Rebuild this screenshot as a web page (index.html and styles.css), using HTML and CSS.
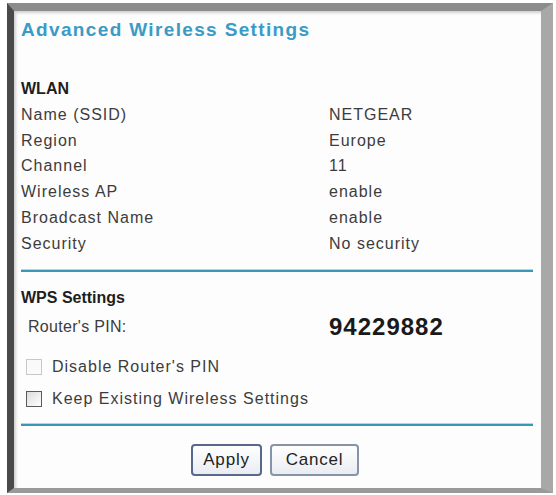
FILE: index.html
```html
<!DOCTYPE html>
<html>
<head>
<meta charset="utf-8">
<link rel="stylesheet" href="styles.css">
</head>
<body>
<div class="frame">
  <div class="content">
    <h1 class="title">Advanced Wireless Settings</h1>
    <div class="table">
      <div class="row head"><span>WLAN</span></div>
      <div class="row"><span class="lbl">Name (SSID)</span><span>NETGEAR</span></div>
      <div class="row"><span class="lbl">Region</span><span>Europe</span></div>
      <div class="row"><span class="lbl">Channel</span><span>11</span></div>
      <div class="row"><span class="lbl">Wireless AP</span><span>enable</span></div>
      <div class="row"><span class="lbl">Broadcast Name</span><span>enable</span></div>
      <div class="row"><span class="lbl">Security</span><span>No security</span></div>
    </div>
    <div class="rule"></div>
    <div class="row head wps"><span>WPS Settings</span></div>
    <div class="pinrow"><span class="pinlbl">Router's PIN:</span><span class="pin">94229882</span></div>
    <div class="check first"><span class="box disabled"></span><span>Disable Router's PIN</span></div>
    <div class="check"><span class="box"></span><span>Keep Existing Wireless Settings</span></div>
    <div class="rule rule2"></div>
    <div class="buttons">
      <button class="btn apply">Apply</button>
      <button class="btn cancel">Cancel</button>
    </div>
  </div>
</div>
</body>
</html>
```

FILE: styles.css
```css
html, body {
  margin: 0;
  padding: 0;
  background: #ffffff;
}
body {
  font-family: "Liberation Sans", Arial, sans-serif;
  color: #3c3c3c;
  width: 556px;
  height: 495px;
  overflow: hidden;
}
.frame {
  margin: 3px 3px 0 7px;
  height: 477px;
  border-left: 7px solid #4a4a4a;
  border-top: 8px solid #8c8c8c;
  border-right: 12px solid #a8a8a8;
  border-bottom: 5px solid #9a9a9a;
  background: #fdfdfd;
  box-shadow: inset 2px 2px 3px rgba(0,0,0,0.18);
}
.content {
  padding: 8px 8px 0 7px;
}
.title {
  margin: 0;
  font-size: 19px;
  line-height: 22px;
  font-weight: bold;
  letter-spacing: 1.35px;
  color: #3a9bc6;
}
.table {
  margin-top: 35px;
}
.row {
  display: grid;
  grid-template-columns: 308px 1fr;
  font-size: 16px;
  line-height: 25.8px;
  letter-spacing: 1px;
  height: 25.8px;
}
.row.head {
  font-weight: bold;
  color: #1e1e1e;
  letter-spacing: 0;
}
.rule {
  margin-top: 12px;
  height: 2px;
  background: #3a97b6;
  border-top: 1px solid #a6dcea;
}
.wps {
  margin-top: 13px;
}
.pinrow {
  display: grid;
  grid-template-columns: 301px 1fr;
  align-items: center;
  height: 30px;
  margin-top: 2px;
  padding-left: 7px;
}
.pinlbl {
  font-size: 16px;
  letter-spacing: 0.3px;
}
.pin {
  font-size: 24px;
  font-weight: bold;
  color: #1a1a1a;
  letter-spacing: 1px;
}
.check {
  display: flex;
  align-items: center;
  gap: 10px;
  height: 32px;
  padding-left: 5px;
  font-size: 16px;
  letter-spacing: 1px;
}
.check.first {
  margin-top: 9px;
}
.box {
  width: 14px;
  height: 14px;
  border: 1px solid #5a5a5a;
  background: linear-gradient(135deg, #dcdcdc, #ffffff);
}
.box.disabled {
  border-color: #c8c8c8;
  background: #fafafa;
}
.rule2 {
  margin-top: 8px;
}
.buttons {
  display: flex;
  justify-content: center;
  gap: 8px;
  margin-top: 18px;
  padding-right: 4px;
}
.btn {
  font-family: "Liberation Sans", Arial, sans-serif;
  font-size: 17px;
  letter-spacing: 0.8px;
  color: #222;
  height: 32px;
  padding: 0;
  border-radius: 4px;
  background: linear-gradient(#ffffff, #e9ecf2);
}
.apply {
  width: 71px;
  border: 2px solid #56698a;
}
.cancel {
  width: 89px;
  border: 2px solid #8793a6;
}
```
